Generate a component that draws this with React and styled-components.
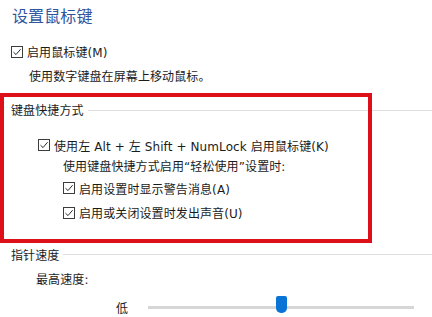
import React from 'react';
import styled, { createGlobalStyle } from 'styled-components';

const GlobalStyle = createGlobalStyle`
    html, body {
        margin: 0;
        padding: 0;
        background: #ffffff;
        overflow: hidden;
    }
    body {
        font-family: "DejaVu Sans", "Noto Sans CJK SC", sans-serif;
        color: #1b1b1b;
        font-size: 12px;
        letter-spacing: 0.1px;
    }
`;

const StyledPage = styled.div`
    position: relative;
    width: 432px;
    height: 317px;
    padding-top: 7px;
    box-sizing: border-box;
    display: flex;
    flex-direction: column;
`;
const StyledTitle = styled.h1`
    margin: 0 0 0 12px;
    height: 20px;
    line-height: 20px;
    font-size: 16px;
    font-weight: normal;
    color: #2f559f;
`;
const StyledRow = styled.div`
    display: flex;
    align-items: center;
    height: 20px;
    margin-top: ${(p) => p.$mt || 0}px;
    padding-left: ${(p) => p.$indent || 0}px;
    white-space: nowrap;
`;
const StyledGroupHeader = styled(StyledRow)`
    gap: 4px;

    &::after {
        content: '';
        flex: 1;
        height: 1px;
        background: #dedede;
        margin-top: 1px;
    }
`;
const StyledBox = styled.span`
    width: 12px;
    height: 12px;
    box-sizing: border-box;
    border: 1px solid #3c3c3c;
    background: #fff;
    display: inline-flex;
    align-items: center;
    justify-content: center;
    margin-right: 4px;
    flex: none;
`;
const StyledSliderRow = styled(StyledRow)`
    gap: 20px;
`;
const StyledTrack = styled.div`
    position: relative;
    width: 266px;
    height: 3px;
    background: #d6d6d6;
`;
const StyledThumb = styled.div`
    position: absolute;
    left: 128px;
    top: -10px;
    width: 11px;
    height: 17px;
    background: #0a74d6;
    border-radius: 2px 2px 5px 5px;
`;
const StyledHighlight = styled.div`
    position: absolute;
    left: 0;
    top: 93px;
    width: 372px;
    height: 150px;
    box-sizing: border-box;
    border: 4px solid #dd1019;
    pointer-events: none;
`;

const Check = ({ children }) => (
    <>
        <StyledBox>
            <svg width="10" height="10" viewBox="0 0 10 10">
                <path d="M1.5 5.2 L4 7.6 L8.6 2.2" fill="none" stroke="#2b2b2b" strokeWidth="1" />
            </svg>
        </StyledBox>
        <span>{children}</span>
    </>
);

const App = () => {
    return (
        <>
            <GlobalStyle />
            <StyledPage>
                <StyledTitle>设置鼠标键</StyledTitle>
                <StyledRow $mt={15} $indent={11}>
                    <Check>启用鼠标键(M)</Check>
                </StyledRow>
                <StyledRow $mt={4} $indent={29}>使用数字键盘在屏幕上移动鼠标。</StyledRow>
                <StyledGroupHeader $mt={15} $indent={11}>键盘快捷方式</StyledGroupHeader>
                <StyledRow $mt={16} $indent={38}>
                    <Check>使用左 Alt + 左 Shift + NumLock 启用鼠标键(K)</Check>
                </StyledRow>
                <StyledRow $mt={1} $indent={63}>使用键盘快捷方式启用“轻松使用”设置时:</StyledRow>
                <StyledRow $mt={3} $indent={63}>
                    <Check>启用设置时显示警告消息(A)</Check>
                </StyledRow>
                <StyledRow $mt={5} $indent={63}>
                    <Check>启用或关闭设置时发出声音(U)</Check>
                </StyledRow>
                <StyledGroupHeader $mt={22} $indent={11}>指针速度</StyledGroupHeader>
                <StyledRow $mt={5} $indent={36}>最高速度:</StyledRow>
                <StyledSliderRow $mt={9} $indent={116}>
                    <span>低</span>
                    <StyledTrack>
                        <StyledThumb />
                    </StyledTrack>
                </StyledSliderRow>
                <StyledHighlight />
            </StyledPage>
        </>
    );
};

export default App;
